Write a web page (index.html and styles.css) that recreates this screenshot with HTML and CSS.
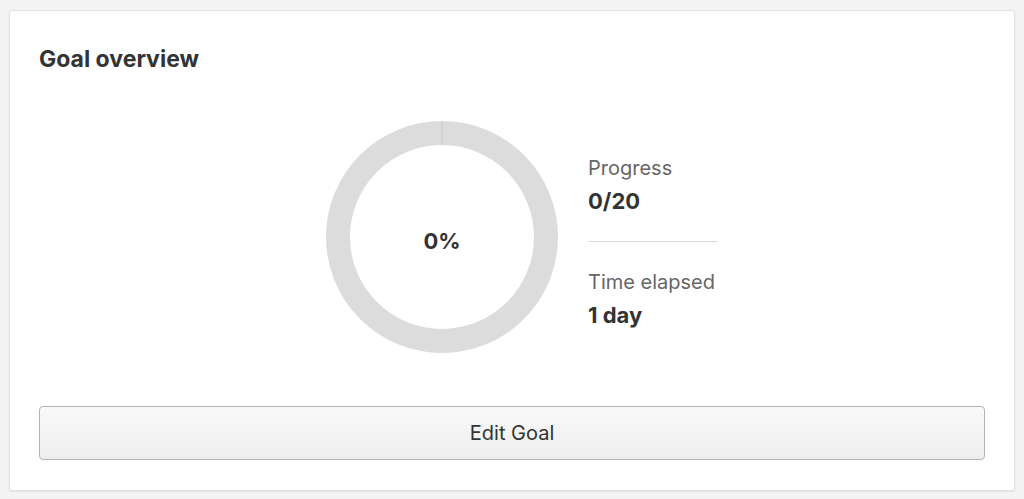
FILE: index.html
```html
<!DOCTYPE html>
<html>
<head>
<meta charset="utf-8">
<link rel="stylesheet" href="styles.css">
</head>
<body>
<div class="card">
  <h2 class="title">Goal overview</h2>
  <div class="overview">
    <div class="donut">
      <svg width="232" height="232" viewBox="0 0 232 232">
        <circle cx="116" cy="116" r="104" fill="none" stroke="#dcdcdc" stroke-width="24"/>
        <line x1="116" y1="0" x2="116" y2="24" stroke="#c9c9c9" stroke-width="1"/>
      </svg>
      <div class="pct">0%</div>
    </div>
    <div class="stats">
      <div class="stat">
        <div class="label">Progress</div>
        <div class="value">0/20</div>
      </div>
      <div class="divider"></div>
      <div class="stat">
        <div class="label">Time elapsed</div>
        <div class="value">1 day</div>
      </div>
    </div>
  </div>
  <button class="btn">Edit Goal</button>
</div>
</body>
</html>
```

FILE: styles.css
```css
html, body {
  margin: 0;
  padding: 0;
  background: #f4f4f4;
  font-family: Inter, "Liberation Sans", sans-serif;
  color: #333;
}
body {
  padding: 10px 9px 9px 9px;
}
.card {
  background: #fff;
  border: 1px solid #e2e2e2;
  border-radius: 3px;
  box-shadow: 0 1px 2px rgba(0,0,0,0.08);
  padding: 30px 29px 30px 29px;
}
.title {
  margin: 0;
  font-size: 23px;
  font-weight: 700;
  line-height: 36px;
  color: #333;
}
.overview {
  display: flex;
  align-items: center;
  padding-left: 287px;
  margin-top: 44px;
}
.donut {
  position: relative;
  width: 232px;
  height: 232px;
}
.donut svg {
  display: block;
}
.pct {
  position: absolute;
  inset: 0;
  display: flex;
  align-items: center;
  justify-content: center;
  font-size: 22px;
  font-weight: 700;
  color: #333;
  padding-top: 8px;
}
.stats {
  margin-left: 30px;
  width: 129px;
  padding-top: 10px;
}
.label {
  font-size: 20px;
  color: #666;
  line-height: 24px;
  white-space: nowrap;
}
.value {
  font-size: 22px;
  font-weight: 700;
  color: #333;
  line-height: 28px;
  margin-top: 7px;
}
.divider {
  height: 1px;
  background: #dcdcdc;
  margin: 26px 0 28px;
}
.btn {
  display: block;
  width: 100%;
  margin-top: 53px;
  height: 54px;
  border: 1px solid #b3b3b3;
  border-radius: 4px;
  background: linear-gradient(#f9f9f9, #eeeeee);
  font-family: Inter, "Liberation Sans", sans-serif;
  font-size: 20px;
  color: #333;
}
```
